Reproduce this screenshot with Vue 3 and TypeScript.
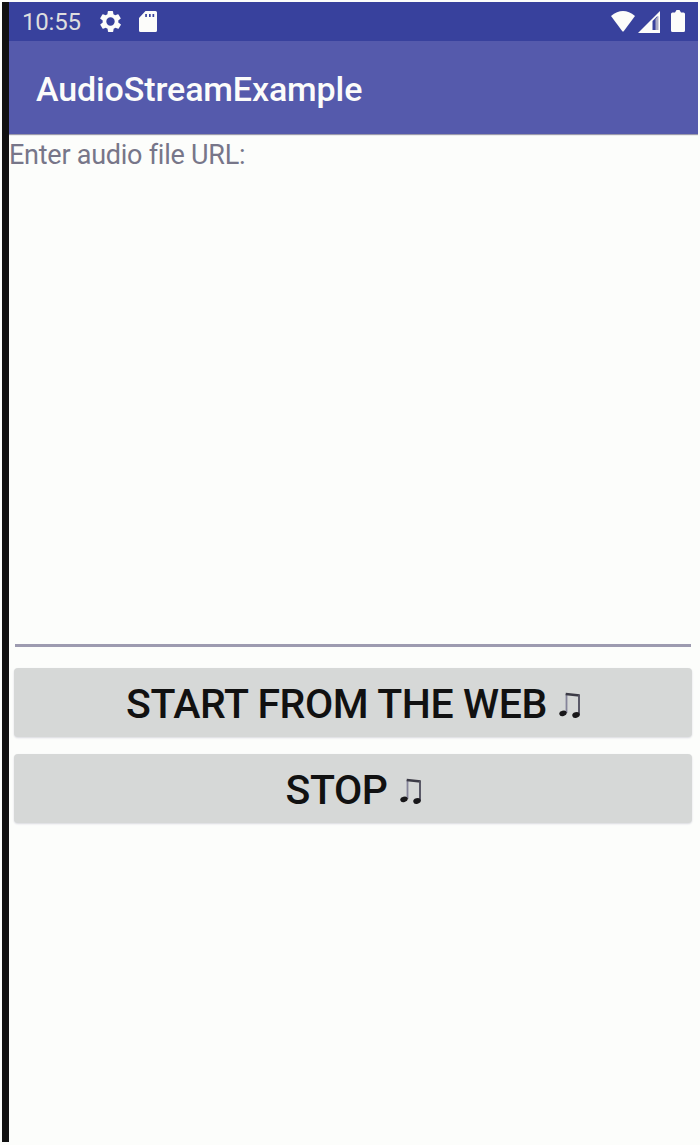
<script setup lang="ts">
interface AudioAction {
  id: string
  label: string
}

const actions: AudioAction[] = [
  { id: 'start', label: 'START FROM THE WEB' },
  { id: 'stop', label: 'STOP' },
]
</script>

<template>
  <div class="page">
    <main class="screen">
      <header class="status">
        <span class="time">10:55</span>
        <svg class="gear" viewBox="2 2 20 20" width="21" height="21">
          <path fill="#fcfcfa" fill-rule="evenodd" d="M19.4 13a7.5 7.5 0 0 0 0-2l2.1-1.6a.5.5 0 0 0 .1-.7l-2-3.4a.5.5 0 0 0-.6-.2l-2.5 1a7.300 7.300 0 0 0-1.700-1L14.400 2.400a.5.5 0 0 0-.5-.4h-4a.5.5 0 0 0-.5.4L9.100 5.100a7.700 7.700 0 0 0-1.700 1l-2.500-1a.5.5 0 0 0-.6.2l-2 3.400a.5.5 0 0 0 .1.7L4.600 11a7.900 7.900 0 0 0 0 2l-2.100 1.600a.5.5 0 0 0-.1.7l2 3.400c.1.2.4.3.6.2l2.500-1a7.300 7.300 0 0 0 1.700 1l.4 2.700c0 .2.2.4.5.4h4c.2 0 .5-.2.5-.4l.4-2.700a7.700 7.700 0 0 0 1.700-1l2.500 1c.2.1.5 0 .6-.2l2-3.400a.5.5 0 0 0-.1-.7zM12 8a4 4 0 1 0 0 8 4 4 0 0 0 0-8z" />
        </svg>
        <svg class="card" viewBox="0 0 18 21" width="18" height="21">
          <path fill="#fcfcfa" fill-rule="evenodd" d="M6.500 0H16.500Q18 0 18 1.500V19.500Q18 21 16.500 21H1.500Q0 21 0 19.500V7zM6.200 3v3h1.700V3zM10 3v3h1.700V3zM13.500 3v3h1.700V3z" />
        </svg>
        <svg class="wifi" viewBox="0 0 24 21" width="24" height="21">
          <path fill="#fcfcfa" d="M0 5Q12-5 24 5L12.500 20.500H11.500z" />
        </svg>
        <svg class="signal" viewBox="0 0 22 22" width="22" height="22">
          <path fill="#fcfcfa" d="M0 22L22 0V22z" />
          <path fill="#38419d" d="M14.500 10L19.500 5V19H14.500z" />
          <path fill="#a9aac4" d="M17.500 8L20.500 5V19H17.500z" />
        </svg>
        <svg class="battery" viewBox="0 0 14 22" width="14" height="22">
          <path fill="#fcfcfa" d="M4 2.500L5.500 0H8.500L10 2.500H12.500Q14 2.500 14 4V20.500Q14 22 12.500 22H1.500Q0 22 0 20.500V4Q0 2.500 1.500 2.500z" />
        </svg>
      </header>
      <div class="appbar"><h1>AudioStreamExample</h1></div>
      <label class="prompt" for="audio-url">Enter audio file URL:</label>
      <input id="audio-url" class="field" type="text" aria-label="Audio file URL" />
      <div class="actions">
        <button v-for="action in actions" :key="action.id" :class="['action', action.id]" type="button">
          <span class="caption">{{ action.label }}</span>
          <svg class="note" viewBox="0 0 24 28" width="24" height="28">
            <path fill="none" stroke="#85849a" stroke-width="1.800" d="M7.500 3V22M20 4V23" />
            <path fill="none" stroke="#3c3b46" stroke-width="2.500" d="M6.700 3L20.700 4.500" />
            <path fill="none" stroke="#565563" stroke-width="1.800" d="M20 4V24" />
            <ellipse cx="4" cy="22.300" rx="3.800" ry="2.700" fill="#181719" transform="rotate(-15 4 22.300)" />
            <ellipse cx="17" cy="24" rx="3.800" ry="2.800" fill="#181719" transform="rotate(-15 17 24)" />
          </svg>
        </button>
      </div>
    </main>
  </div>
</template>

<style>
body {
  margin: 0;
  background: #fcfdfb;
}
</style>

<style scoped>
.page {
  box-sizing: border-box;
  width: 700px;
  height: 1145px;
  padding: 2px 2px 3px;
  background: #fcfdfb;
  font-family: Roboto, "Liberation Sans", sans-serif;
}
.screen {
  box-sizing: border-box;
  display: flex;
  flex-direction: column;
  height: 1140px;
  border-left: 7px solid #111;
}
.status {
  display: flex;
  flex: none;
  align-items: flex-start;
  height: 39px;
  background: #38419d;
}
.time {
  width: 78px;
  margin-left: 13px;
  margin-top: 6px;
  color: #dededf;
  font-size: 24px;
  line-height: 28px;
  letter-spacing: -0.2px;
}
.gear { margin-top: 9px; }
.card { margin: 9px 0 0 18px; }
.wifi { margin: 9px 0 0 auto; }
.signal { margin: 9px 0 0 3px; }
.battery { margin: 8px 13px 0 11px; }
.appbar {
  display: flex;
  flex: none;
  align-items: center;
  height: 93px;
  padding-left: 27px;
  background: #555aac;
  box-shadow: 0 1px 1px #9b9aac;
  clip-path: inset(0 0 -3px 0);
}
h1 {
  margin: 2px 0 0;
  color: #fcfcfa;
  font-size: 34px;
  font-weight: 500;
  line-height: 40px;
  letter-spacing: -0.12px;
}
.prompt {
  flex: none;
  height: 32px;
  margin-top: 5px;
  color: #777689;
  font-size: 27px;
  line-height: 32px;
  letter-spacing: -0.25px;
  white-space: nowrap;
}
.field {
  box-sizing: border-box;
  flex: none;
  height: 476px;
  margin: 0 7px 0 6px;
  padding: 0;
  border: 0;
  border-bottom: 3px solid #9d9bb0;
  outline: 0;
  background: transparent;
}
.actions {
  display: flex;
  flex-direction: column;
  gap: 17px;
  margin: 21px 6px 0 5px;
}
.action {
  display: flex;
  align-items: center;
  justify-content: center;
  height: 69px;
  padding: 0 0 0 3px;
  border: 0;
  border-radius: 4px;
  background: #d6d8d7;
  box-shadow: 0 1px 2px #d9d9df;
  color: #111;
  font-family: inherit;
  font-size: 41px;
  font-weight: 500;
  line-height: 48px;
}
.caption {
  margin-top: 2px;
  letter-spacing: -0.4px;
}
.note {
  margin: 4px 0 0 12px;
}
</style>
